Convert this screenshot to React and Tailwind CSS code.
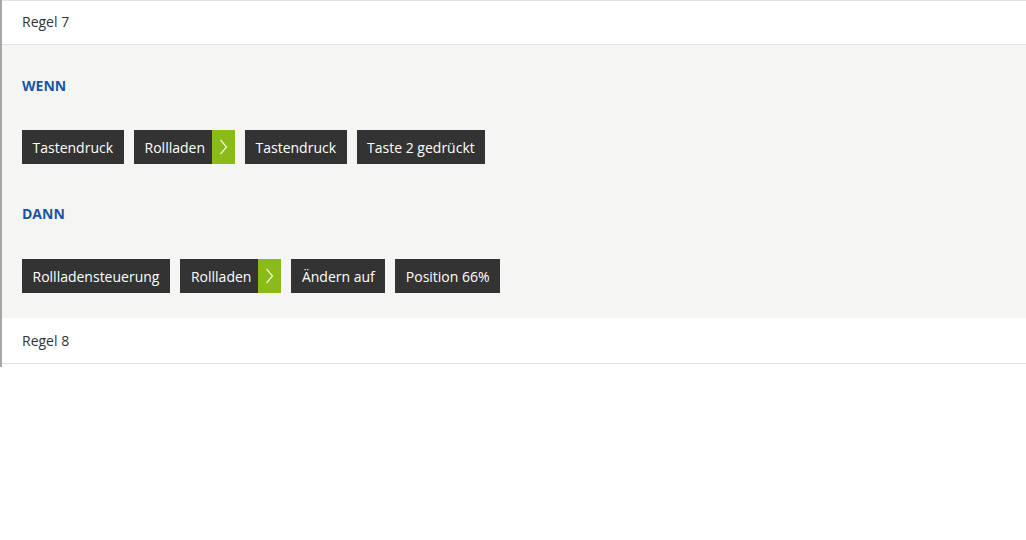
import React from 'react';

function Chip({ label, arrow }) {
  return (
    <div className="flex h-[34px] items-stretch bg-[#333333] text-white">
      <span className={arrow ? 'flex items-center pl-[11px] pr-[7px] text-[14px]' : 'flex items-center px-[10.5px] text-[14px]'}>{label}</span>
      {arrow && (
        <span className="flex w-[23px] items-center justify-center bg-[#8bbb19]">
          <svg width="9" height="16" viewBox="0 0 9 16" fill="none">
            <path d="M1.5 1 L7.5 8 L1.5 15" stroke="#eaf6cf" strokeWidth="1.3" />
          </svg>
        </span>
      )}
    </div>
  );
}

export default function App() {
  const when = [
    { label: 'Tastendruck' },
    { label: 'Rollladen', arrow: true },
    { label: 'Tastendruck' },
    { label: 'Taste 2 gedrückt' },
  ];
  const then = [
    { label: 'Rollladensteuerung' },
    { label: 'Rollladen', arrow: true },
    { label: 'Ändern auf' },
    { label: 'Position 66%' },
  ];

  return (
    <div className="min-h-[540px] bg-white font-['Open_Sans',sans-serif] text-[14px] text-[#333333]">
      <div className="border-l-2 border-[#a6a6a6] pb-[3px]">
        <div className="flex h-[45px] items-center border-y border-[#e3e3e3] pb-[2px] pl-[20px]">Regel 7</div>
        <div className="bg-[#f5f5f3] pl-[20px] pt-[31px] pb-[25px]">
          <div className="text-[14px] font-bold leading-5 text-[#1a55a3]">WENN</div>
          <div className="mt-[34px] flex gap-[10px]">
            {when.map((c, i) => <Chip key={i} {...c} />)}
          </div>
          <div className="mt-[40px] text-[14px] font-bold leading-5 text-[#1a55a3]">DANN</div>
          <div className="mt-[35px] flex gap-[10px]">
            {then.map((c, i) => <Chip key={i} {...c} />)}
          </div>
        </div>
        <div className="flex h-[46px] items-center border-b border-[#e3e3e3] pl-[20px]">Regel 8</div>
      </div>
    </div>
  );
}
